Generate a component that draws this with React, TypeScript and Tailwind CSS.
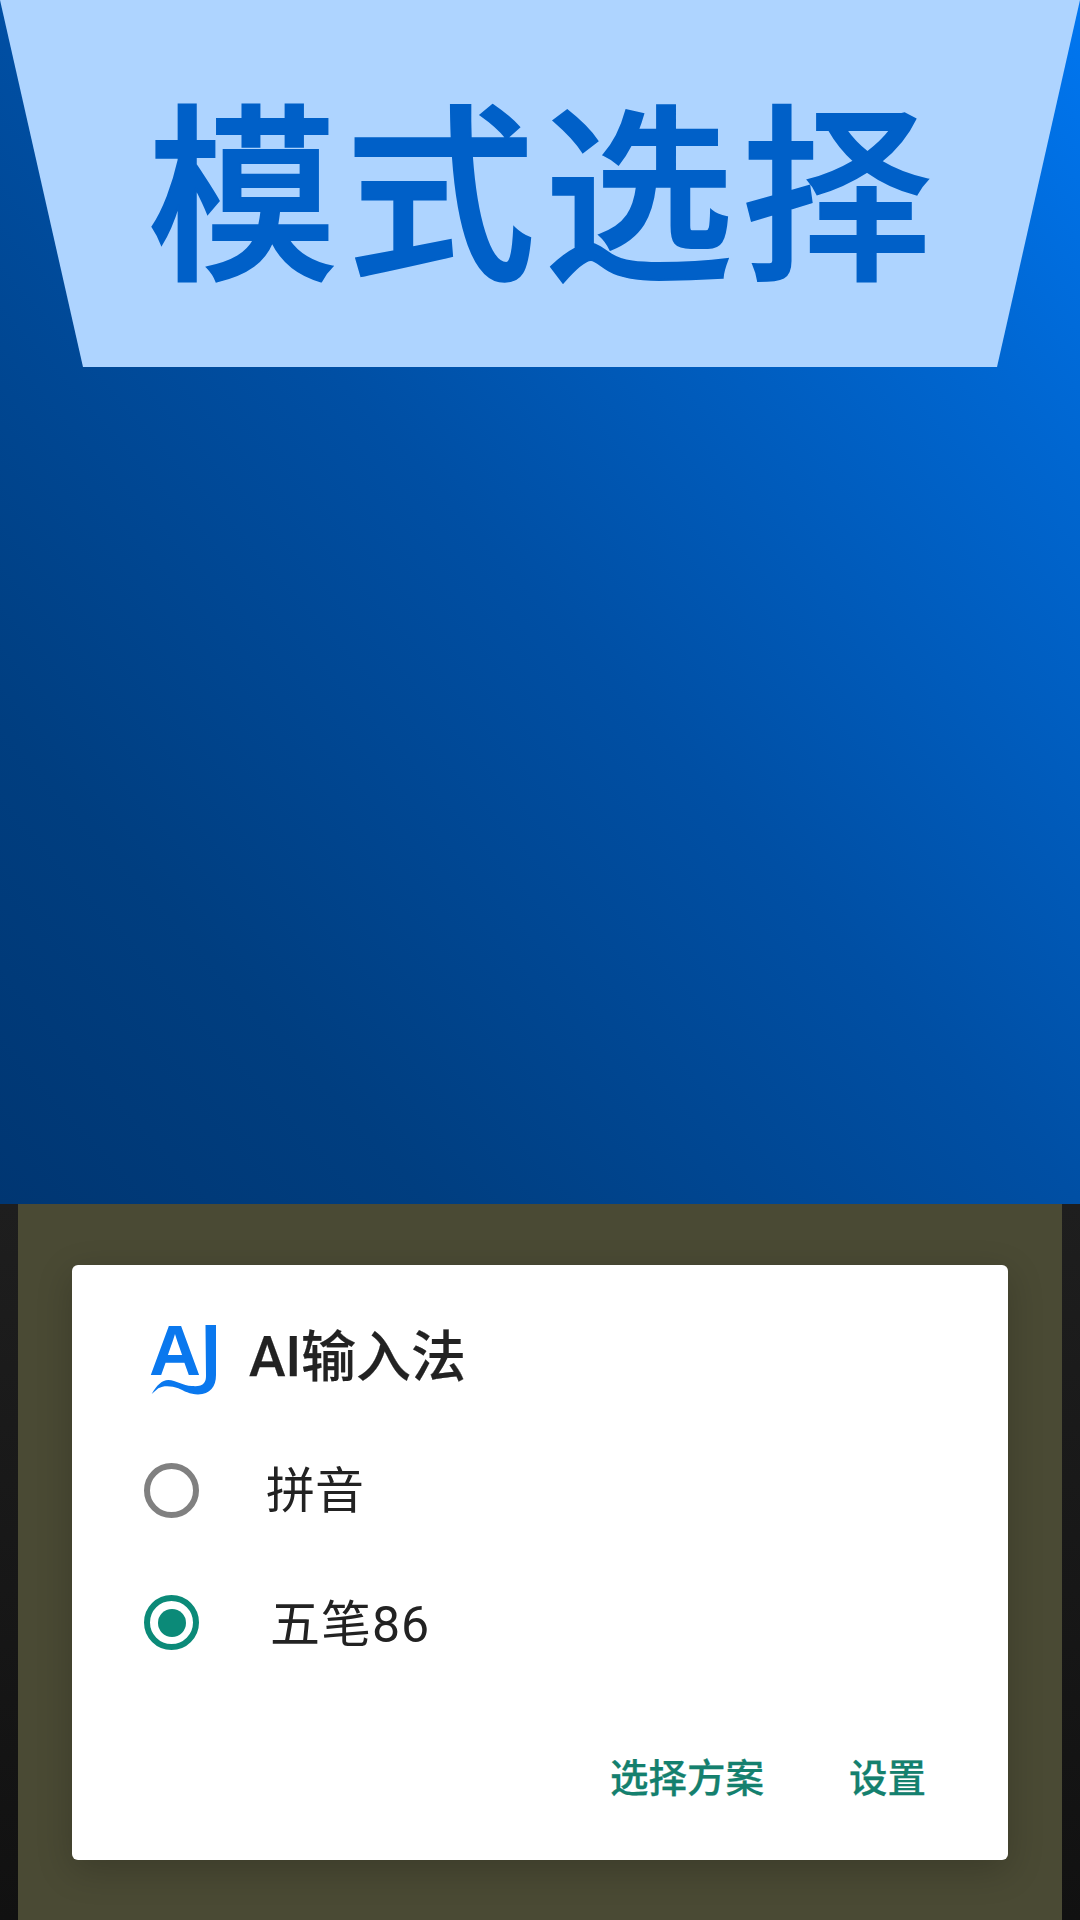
const cjk = "font-['Roboto','Noto_Sans_CJK_SC',sans-serif]";

function Logo() {
  return (
    <svg width="68" height="72" viewBox="0 0 68 72" className="shrink-0 overflow-visible">
      <text x="-1" y="52" fontFamily="'Liberation Sans', sans-serif" fontWeight="700" fontSize="70" fill="#0a78ee" textLength="52" lengthAdjust="spacingAndGlyphs">
        A
      </text>
      <path
        d="M1.7 71 C7 62 12 57 18.3 57 C26 57 33 63 41.7 63 C47 63.5 52 63 54 60 C55.5 58 56 56 56 53 L55.500 2 L66 2 L66 52 C66 64 60 71 48 71.500 C40 71.500 34 68 28.300 65.300 C22 63 14 62 8.300 65.300 Z"
        fill="#0a78ee"
      />
    </svg>
  );
}

function Radio({ checked }: { checked?: boolean }) {
  return (
    <span
      className={
        checked
          ? 'flex h-[55px] w-[55px] shrink-0 items-center justify-center rounded-full border-[6px] border-[#0b8a78]'
          : 'flex h-[55px] w-[55px] shrink-0 items-center justify-center rounded-full border-[6px] border-[#808080]'
      }
    >
      {checked ? <span className="h-[28px] w-[28px] rounded-full bg-[#0b8a78]" /> : null}
    </span>
  );
}

export default function App() {
  return (
    <main className={`flex h-[1920px] w-[1080px] flex-col overflow-hidden bg-[#171717] ${cjk}`}>
      <section className="h-[1204px] shrink-0 bg-[linear-gradient(228deg,#0076f0_0%,#0066d0_20%,#004fa4_50%,#003e80_80%,#003672_100%)]">
        <div className="flex h-[367px] items-center justify-center bg-[#aed4ff] pl-[7px] pt-[32px] [clip-path:polygon(0_0,100%_0,997px_100%,83px_100%)]">
          <h1 className="text-[190px] font-medium leading-none tracking-[8px] text-[#0060c8] [-webkit-text-stroke:2px_#0060c8]">模式选择</h1>
        </div>
      </section>

      <section className="flex flex-1 bg-[linear-gradient(180deg,#1e1e1e,#111111)] px-[18px]">
        <div className="flex-1 bg-[#4a4a34] px-[54px] pt-[61px]">
          <div className="flex h-[595px] flex-col rounded-[6px] bg-white shadow-[0_10px_36px_rgba(0,0,0,0.2)]">
            <div className="mt-[58px] flex items-center pl-[78px]">
              <Logo />
              <span className="ml-[31px] -translate-y-[2px] text-[55px] font-medium leading-none text-[#222222] [-webkit-text-stroke:0.25px_#222222]">AI输入法</span>
            </div>
            <div className="mt-[68px] flex items-center pl-[72px]">
              <Radio />
              <span className="ml-[67px] translate-y-[1px] text-[49px] leading-none text-[#222222]">拼音</span>
            </div>
            <div className="mt-[77px] flex items-center pl-[72px]">
              <Radio checked />
              <span className="ml-[71px] translate-y-[2px] text-[50px] leading-none tracking-[1px] text-[#222222]">五笔86</span>
            </div>
            <div className="mt-auto flex justify-end gap-[85px] pb-[62px] pr-[82px]">
              <button type="button" className="text-[38.5px] font-medium leading-none text-[#14806e] [-webkit-text-stroke:0.25px_#14806e]">选择方案</button>
              <button type="button" className="text-[38.5px] font-medium leading-none text-[#14806e] [-webkit-text-stroke:0.25px_#14806e]">设置</button>
            </div>
          </div>
        </div>
      </section>
    </main>
  );
}
